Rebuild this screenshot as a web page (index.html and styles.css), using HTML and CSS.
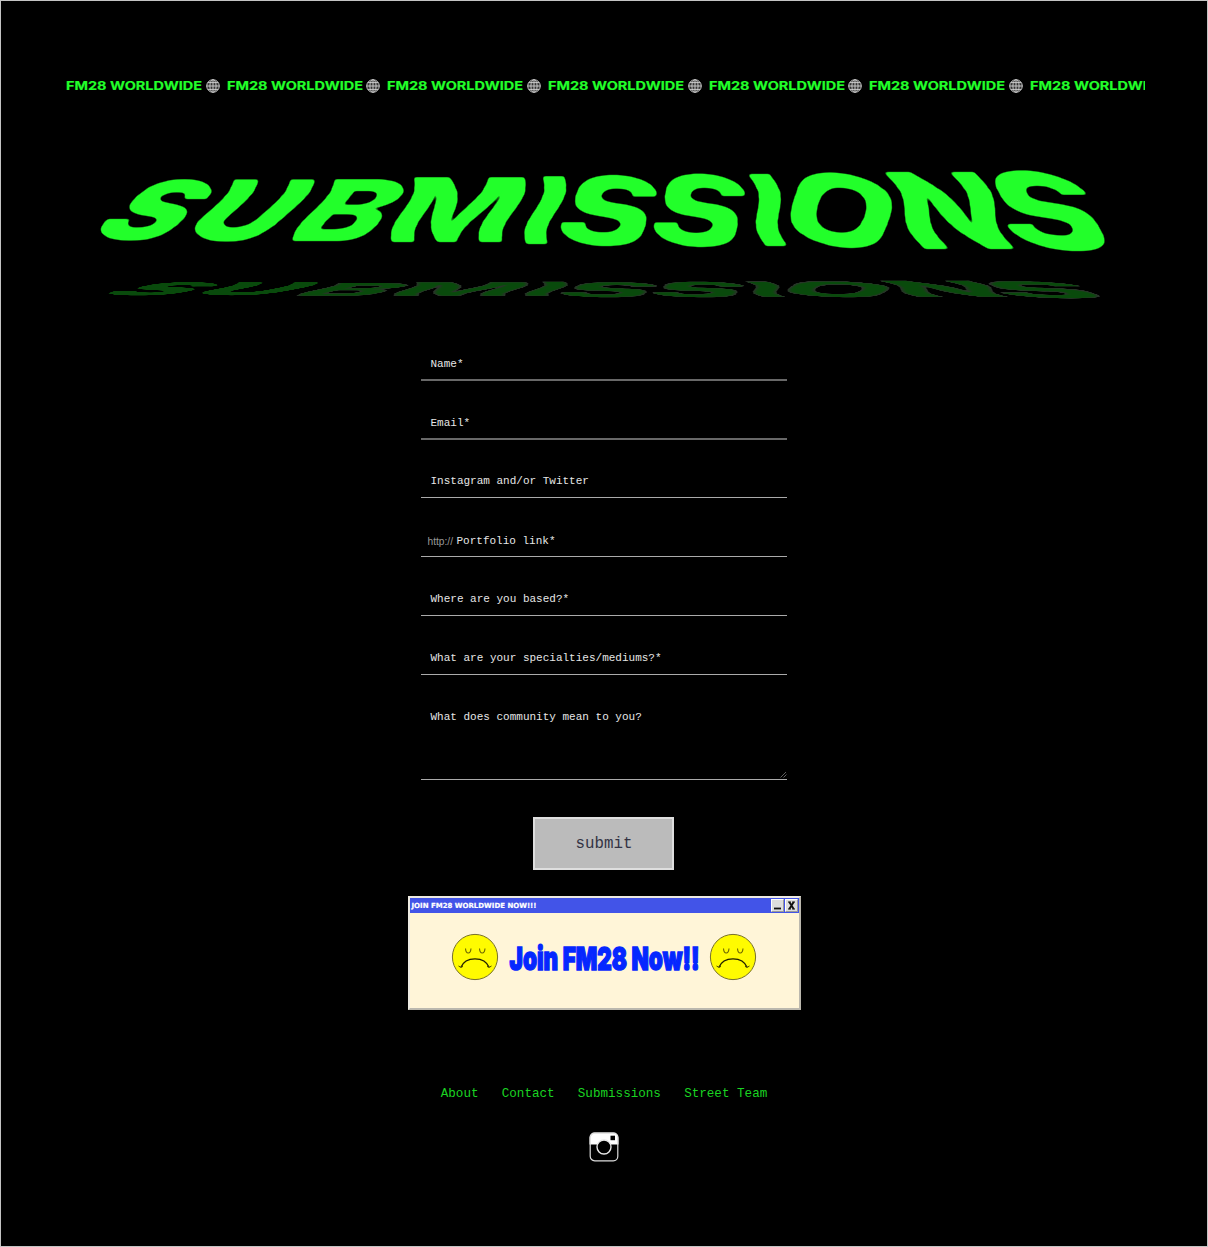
FILE: index.html
```html
<!DOCTYPE html>
<html lang="en">
<head>
<meta charset="utf-8">
<title>FM28 Worldwide – Submissions</title>
<link rel="stylesheet" href="styles.css">
</head>
<body>
<svg class="defs" width="0" height="0" aria-hidden="true">
  <symbol id="globe" viewBox="0 0 16 16">
    <circle cx="8" cy="8" r="6.3"/>
    <ellipse cx="8" cy="8" rx="3.1" ry="6.3"/>
    <path d="M8 1.7V14.3M1.7 8H14.3M2.800 4.600H13.200M2.800 11.400H13.200"/>
  </symbol>
  <symbol id="sad" viewBox="0 0 48 48">
    <circle cx="24" cy="24" r="22.6" fill="#fffb00" stroke="#77702c" stroke-width="1"/>
    <path d="M14.500 15.500c.4 6 5 6 5.500 0M28.500 15.500c.4 6 5 6 5.500 0" fill="none" stroke="#6b6500" stroke-width="1.100"/>
    <path d="M9.800 34.500C14.500 23 33.500 23 38.200 34.500" fill="none" stroke="#222000" stroke-width="1.400"/>
    <path d="M7.500 33q1.500 2 4.500 .5M36 33.500q3 1.500 4.500-.5" fill="none" stroke="#4a4600" stroke-width="1"/>
  </symbol>
</svg>
<main class="page">
  <div class="ticker">
    <div class="tick"><svg class="word" width="137" height="16"><text x="0" y="12.300" textLength="136" lengthAdjust="spacingAndGlyphs">FM28 WORLDWIDE</text></svg><svg class="globe"><use href="#globe"/></svg></div>
    <div class="tick"><svg class="word" width="137" height="16"><text x="0" y="12.300" textLength="136" lengthAdjust="spacingAndGlyphs">FM28 WORLDWIDE</text></svg><svg class="globe"><use href="#globe"/></svg></div>
    <div class="tick"><svg class="word" width="137" height="16"><text x="0" y="12.300" textLength="136" lengthAdjust="spacingAndGlyphs">FM28 WORLDWIDE</text></svg><svg class="globe"><use href="#globe"/></svg></div>
    <div class="tick"><svg class="word" width="137" height="16"><text x="0" y="12.300" textLength="136" lengthAdjust="spacingAndGlyphs">FM28 WORLDWIDE</text></svg><svg class="globe"><use href="#globe"/></svg></div>
    <div class="tick"><svg class="word" width="137" height="16"><text x="0" y="12.300" textLength="136" lengthAdjust="spacingAndGlyphs">FM28 WORLDWIDE</text></svg><svg class="globe"><use href="#globe"/></svg></div>
    <div class="tick"><svg class="word" width="137" height="16"><text x="0" y="12.300" textLength="136" lengthAdjust="spacingAndGlyphs">FM28 WORLDWIDE</text></svg><svg class="globe"><use href="#globe"/></svg></div>
    <div class="tick"><svg class="word" width="137" height="16"><text x="0" y="12.300" textLength="136" lengthAdjust="spacingAndGlyphs">FM28 WORLDWIDE</text></svg><svg class="globe"><use href="#globe"/></svg></div>
  </div>

  <svg class="title" width="1208" height="160" viewBox="0 150 1208 160" role="img" aria-label="Submissions">
    <defs>
      <filter id="wave" filterUnits="userSpaceOnUse" x="80" y="168" width="1048" height="86" color-interpolation-filters="sRGB">
        <feImage x="80" y="168" width="1048" height="86" preserveAspectRatio="none" result="map" href="data:image/svg+xml,%3Csvg xmlns='http://www.w3.org/2000/svg' width='1048' height='86' viewBox='0 0 1048 86' preserveAspectRatio='none'%3E%3ClinearGradient id='g' x1='0' y1='0' x2='0' y2='1'%3E%3Cstop offset='.06' stop-color='rgb(128,128,128)'/%3E%3Cstop offset='.17' stop-color='rgb(50,128,128)'/%3E%3Cstop offset='.28' stop-color='rgb(15,128,128)'/%3E%3Cstop offset='.39' stop-color='rgb(50,128,128)'/%3E%3Cstop offset='.5' stop-color='rgb(128,128,128)'/%3E%3Cstop offset='.61' stop-color='rgb(206,128,128)'/%3E%3Cstop offset='.72' stop-color='rgb(241,128,128)'/%3E%3Cstop offset='.83' stop-color='rgb(206,128,128)'/%3E%3Cstop offset='.94' stop-color='rgb(128,128,128)'/%3E%3C/linearGradient%3E%3Crect width='1048' height='86' fill='url(%23g)'/%3E%3C/svg%3E"/>
        <feDisplacementMap in="SourceGraphic" in2="map" scale="14" xChannelSelector="R" yChannelSelector="G"/>
        <feGaussianBlur stdDeviation="1.500"/>
        <feComponentTransfer><feFuncA type="linear" slope="3" intercept="-.95"/></feComponentTransfer>
      </filter>
    </defs>
    <g id="word" filter="url(#wave)">
      <text class="heavy" transform="matrix(1 0 -.62 .8 93 238.500)" textLength="82" lengthAdjust="spacingAndGlyphs">S</text>
      <text class="heavy" transform="matrix(1 0 -.56 .82 184 239.500)" textLength="93" lengthAdjust="spacingAndGlyphs">U</text>
      <text transform="matrix(1 0 -.5 .85 288 240.500)" textLength="89" lengthAdjust="spacingAndGlyphs">B</text>
      <text transform="matrix(1 0 -.24 .89 387 242)" textLength="126" lengthAdjust="spacingAndGlyphs">M</text>
      <text transform="matrix(1 0 -.18 .93 521 243.500)" textLength="36" lengthAdjust="spacingAndGlyphs">I</text>
      <text transform="matrix(1 0 -.05 .95 560 244.500)" textLength="95" lengthAdjust="spacingAndGlyphs">S</text>
      <text transform="matrix(1 0 .07 .98 655.500 245.500)" textLength="94" lengthAdjust="spacingAndGlyphs">S</text>
      <text transform="matrix(1 0 .27 .99 760 246)" textLength="36" lengthAdjust="spacingAndGlyphs">I</text>
      <text transform="matrix(1 0 .3 1.010 796 247)" textLength="112" lengthAdjust="spacingAndGlyphs">O</text>
      <text transform="matrix(1 0 .56 1.060 917 248.500)" textLength="106" lengthAdjust="spacingAndGlyphs">N</text>
      <text transform="matrix(1 0 .74 1.080 1024 250)" textLength="102" lengthAdjust="spacingAndGlyphs">S</text>
    </g>
    <use class="shadow" href="#word" transform="translate(9.500 244.700) scale(.985 .212)"/>
  </svg>

  <form class="form">
    <div class="field soft"><span>Name*</span></div>
    <div class="field soft"><span>Email*</span></div>
    <div class="field short"><span>Instagram and/or Twitter</span></div>
    <div class="field link"><span class="prefix">http://</span><span>Portfolio link*</span></div>
    <div class="field"><span>Where are you based?*</span></div>
    <div class="field"><span>What are your specialties/mediums?*</span></div>
    <div class="field area"><span>What does community mean to you?</span>
      <svg class="grip" width="7" height="7"><path d="M.5 6.500L6 1M3.500 6.500L6.500 3.500"/></svg></div>
    <button class="submit" type="button">submit</button>
  </form>

  <section class="window">
    <header class="bar">
      <svg width="130" height="15"><text class="bar-text" x="1.500" y="10" textLength="125" lengthAdjust="spacingAndGlyphs">JOIN FM28 WORLDWIDE NOW!!!</text></svg>
      <div class="controls">
        <svg class="control" width="13" height="13" viewBox="1 1 11 11"><path d="M3 9.500H10" stroke-width="1.800"/></svg>
        <svg class="control" width="13" height="13" viewBox="1 1 11 11"><path d="M4.300 3L8.700 10M8.700 3L4.300 10" stroke-width="1.900"/><path d="M3 3H5.800M7.300 3H10M3 10H5.800M7.300 10H10" stroke-width="1"/></svg>
      </div>
    </header>
    <div class="window-body">
      <svg class="face"><use href="#sad"/></svg>
      <svg width="192" height="40"><text class="join" x="1.500" y="32.500" textLength="190" lengthAdjust="spacingAndGlyphs">Join FM28 Now!!</text></svg>
      <svg class="face"><use href="#sad"/></svg>
    </div>
  </section>

  <nav class="nav"><a>About</a><a>Contact</a><a>Submissions</a><a>Street Team</a></nav>
  <svg class="insta" width="30" height="30" viewBox="0 0 30 30">
    <path d="M.5 12.500V5.500a5 5 0 0 1 5-5h19a5 5 0 0 1 5 5V12.500Z" fill="#fff"/>
    <rect x="1.200" y="1.200" width="27.600" height="27.600" rx="4.500" fill="none" stroke="#ddd" stroke-width="1.200"/>
    <circle cx="15" cy="15" r="7" fill="#000" stroke="#e8e8e8" stroke-width="1.400"/>
    <rect x="21.500" y="3.700" width="4.500" height="4.500" fill="#000"/>
  </svg>
</main>
</body>
</html>
```
FILE: styles.css
```css
* { box-sizing: border-box; }
body { margin: 0; background: #000; }
.defs { position: absolute; }
.page {
  height: 1247px;
  border: 1px solid #c4c4c4;
  display: flex;
  flex-direction: column;
  align-items: center;
  background: #000;
  overflow: hidden;
}
svg { display: block; flex: none; overflow: visible; }

.ticker {
  width: 1079px;
  height: 16px;
  margin: 77px 0 0 3px;
  display: flex;
  overflow: hidden;
}
.tick { flex: 0 0 160.7px; display: flex; gap: 1.5px; }
.word { font: 700 11.6px Inter, sans-serif; fill: #22ff2a; stroke: #22ff2a; stroke-width: .15; }
.globe { width: 16px; height: 16px; fill: #333; stroke: #c8c8c8; stroke-width: 1; }

.title {
  margin: 56px -1px 0;
  font: 800 100px Inter, sans-serif;
  fill: #22ff2a;
}
.heavy { stroke: #22ff2a; stroke-width: 2px; }
.shadow { opacity: .29; stroke: #a0a0a0; stroke-width: 1.6; }

.form {
  width: 366px;
  margin-top: 12px;
  display: flex;
  flex-direction: column;
  font: 11px "Courier New", "Liberation Mono", monospace;
  color: #e6e6e6;
}
.field {
  height: 59px;
  padding: 0 0 9px 9.5px;
  border-bottom: 1px solid #aaa;
  display: flex;
  align-items: flex-end;
  line-height: 13px;
}
.soft { border-bottom: 2px solid #686868; padding-bottom: 8px; }
.short { height: 58px; }
.link { padding: 0 0 8px 6.5px; gap: 3.5px; }
.prefix { font-family: "Liberation Sans", sans-serif; font-size: 10.2px; line-height: 12px; color: #999; }
.area { height: 105px; align-items: flex-start; justify-content: space-between; padding: 36px 0 0 9.5px; }
.grip { align-self: flex-end; fill: none; stroke: #777; stroke-width: .8; margin-bottom: 1px; }
.submit {
  align-self: center;
  width: 141px;
  height: 53px;
  margin: 37px 0 0 -1px;
  border: 2px solid #dedede;
  background: #bbb;
  color: #333344;
  font: 15.8px "Courier New", "Liberation Mono", monospace;
  padding: 0 0 0 1px;
}

.window {
  width: 393px;
  height: 114px;
  margin-top: 26px;
  border: 2px solid;
  border-color: #eeebe2 #bbb8ae #bbb8ae #eeebe2;
  background: #fff5d8;
}
.bar {
  height: 15px;
  background: #4254e8;
  display: flex;
  justify-content: space-between;
  align-items: center;
  padding-right: 1px;
}
.bar-text { font: bold 7px "DejaVu Sans", sans-serif; fill: #fff; stroke: #fff; stroke-width: .2; }
.controls { display: flex; gap: 1px; }
.control { background: #ddd; border: 1px solid; border-color: #fff #999 #999 #fff; stroke: #111; fill: none; }
.window-body {
  height: 88px;
  display: flex;
  align-items: center;
  justify-content: center;
  gap: 9px;
}
.face { width: 48px; height: 48px; }
.join { font: 900 32px Inter, sans-serif; fill: #0527ff; stroke: #0527ff; stroke-width: 1.5; }

.nav {
  display: flex;
  gap: 23.2px;
  margin-top: 77px;
  font: 12.6px/15px "Courier New", "Liberation Mono", monospace;
  color: #1ad322;
}
.insta { margin: 30px 0 0 0; }
```
